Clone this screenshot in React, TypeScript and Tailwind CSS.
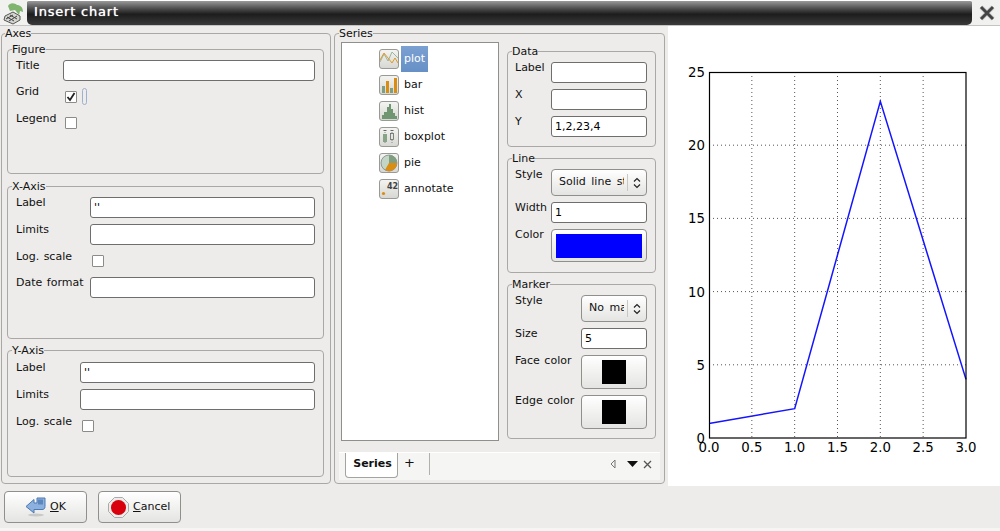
import React from "react";

function Group({ title, className, legend = "ml-[4px]", children }: { title: string; className: string; legend?: string; children: React.ReactNode }) {
  return (
    <fieldset className={`rounded-[4px] border border-[#a9a8a5] ${className}`}>
      <legend className={`h-[14px] text-[11px] leading-[16px] ${legend}`}>{title}</legend>
      {children}
    </fieldset>
  );
}

function Row({ label, labelWidth, height, children }: { label: string; labelWidth: string; height: string; children: React.ReactNode }) {
  return (
    <div className={`flex ${height}`}>
      <div className={`shrink-0 whitespace-nowrap leading-[16px] [word-spacing:1px] ${labelWidth}`}>{label}</div>
      {children}
    </div>
  );
}

function TextBox({ value = "", width }: { value?: string; width: string }) {
  return (
    <input
      readOnly
      value={value}
      className={`mt-[2px] h-[21px] rounded-[3px] border border-[#6e6e6c] bg-white px-[3px] text-[11px] text-black outline-none ${width}`}
    />
  );
}

function CheckBox({ checked, top }: { checked?: boolean; top: string }) {
  return (
    <div className={`ml-[2px] flex h-[12px] w-[12px] items-center justify-center rounded-[1px] border border-[#8b8b88] bg-white ${top}`}>
      {checked && (
        <svg width="10" height="10" viewBox="0 0 10 10">
          <path d="M1.5 5 L4 8 L8.5 1" fill="none" stroke="#222" strokeWidth="1.8" />
        </svg>
      )}
    </div>
  );
}

function Combo({ text, width }: { text: string; width: string }) {
  return (
    <div className={`mt-[2px] flex h-[27px] items-center rounded-[4px] border border-[#8f8f8c] bg-gradient-to-b from-white to-[#e4e4e2] ${width}`}>
      <div className="ml-[7px] mr-[3px] flex-1 overflow-hidden whitespace-nowrap [word-spacing:2px]">{text}</div>
      <div className="h-[17px] w-px bg-[#c8c8c6]" />
      <svg width="18" height="14" viewBox="0 0 18 14">
        <path d="M6 5.5 L9 2.5 L12 5.5 M6 8.5 L9 11.5 L12 8.5" fill="none" stroke="#222" strokeWidth="1.2" />
      </svg>
    </div>
  );
}

function ColorButton({ height, swatch, width }: { height: string; swatch: string; width: string }) {
  return (
    <div className={`mt-[2px] flex items-center justify-center rounded-[4px] border border-[#8f8f8c] bg-gradient-to-b from-white to-[#e4e4e2] ${height} ${width}`}>
      <div className={swatch} />
    </div>
  );
}

function ToolIcon({ children }: { children: React.ReactNode }) {
  return (
    <svg width="20" height="20" viewBox="0 0 20 20" className="shrink-0">
      <defs>
        <linearGradient id="toolbg" x1="0" y1="0" x2="0" y2="1">
          <stop offset="0" stopColor="#f4f4f2" />
          <stop offset="1" stopColor="#d6d6d2" />
        </linearGradient>
      </defs>
      <rect x="0.5" y="0.5" width="19" height="19" rx="2.5" fill="url(#toolbg)" stroke="#9a9a94" />
      {children}
    </svg>
  );
}

const seriesTypes = [
  {
    name: "plot",
    icon: (
      <>
        <path d="M1 13 L5 5 L9 12 L13 3 L19 9" fill="none" stroke="#9db59a" strokeWidth="1" />
        <path d="M1 11 L5 4 L9 9 L13 14 L16 9 L19 14" fill="none" stroke="#dd9a2b" strokeWidth="1" />
      </>
    ),
  },
  {
    name: "bar",
    icon: (
      <>
        <rect x="3" y="11" width="3" height="7" fill="#7f9f80" />
        <rect x="7" y="6" width="3" height="12" fill="#d98d12" />
        <rect x="11" y="13" width="3" height="5" fill="#7f9f80" />
        <rect x="15" y="3" width="3" height="15" fill="#d98d12" />
      </>
    ),
  },
  {
    name: "hist",
    icon: (
      <path d="M3 18 V14 H5 V11 H8 V6 H10 V3 H12 V8 H14 V12 H16 V15 H18 V18 Z" fill="#6f9670" />
    ),
  },
  {
    name: "boxplot",
    icon: (
      <>
        <path d="M6 3 V17 M13 3 V17" stroke="#888" strokeWidth="1" strokeDasharray="1 1" fill="none" />
        <path d="M4.5 3.5 H7.5 M11.5 3.5 H14.5" stroke="#666" strokeWidth="1" fill="none" />
        <rect x="4" y="7" width="4" height="8" fill="#85a586" />
        <rect x="11.5" y="6.5" width="3" height="6" fill="#dfe7df" stroke="#666" strokeWidth="0.8" />
      </>
    ),
  },
  {
    name: "pie",
    icon: (
      <>
        <circle cx="10" cy="10" r="8" fill="#c3d5c5" stroke="#667" strokeWidth="0.6" />
        <path d="M10 10 L10 2 A8 8 0 0 1 18 10 Z" fill="#7f9f80" />
        <path d="M10 10 L18 10 A8 8 0 0 1 6 17 Z" fill="#d98d12" />
      </>
    ),
  },
  {
    name: "annotate",
    icon: (
      <>
        <circle cx="4.5" cy="14.5" r="1.6" fill="#d98d12" />
        <text x="8" y="10" fontSize="8" fontWeight="bold" fill="#444" fontFamily="DejaVu Sans">42</text>
      </>
    ),
  },
];

function Chart() {
  const xTicks = ["0.0", "0.5", "1.0", "1.5", "2.0", "2.5", "3.0"];
  const yTicks = ["0", "5", "10", "15", "20", "25"];
  return (
    <svg width="332" height="460" viewBox="0 0 332 460" fontFamily="DejaVu Sans" fontSize="13.3" fill="#000">
      {xTicks.map((t, i) => {
        const x = 41 + i * 42.83;
        return (
          <g key={t}>
            {i > 0 && i < 6 && <line x1={x} y1="46" x2={x} y2="412" stroke="#555" strokeWidth="1" strokeDasharray="1 3" />}
            <text x={x} y="425.5" textAnchor="middle">{t}</text>
          </g>
        );
      })}
      {yTicks.map((t, i) => {
        const y = 412 - i * 73.2;
        return (
          <g key={t}>
            {i > 0 && i < 5 && <line x1="41" y1={y} x2="298" y2={y} stroke="#555" strokeWidth="1" strokeDasharray="1 3" />}
            <text x="37" y={y + 5} textAnchor="end">{t}</text>
          </g>
        );
      })}
      <polyline points="41,397.4 126.67,382.7 212.33,75.3 298,353.4" fill="none" stroke="#1414ff" strokeWidth="1.5" />
      <rect x="41.5" y="46.5" width="256.5" height="365.5" fill="none" stroke="#000" strokeWidth="1.2" />
    </svg>
  );
}

export default function App() {
  return (
    <div className="flex h-[531px] w-[1000px] flex-col overflow-hidden bg-[#edecea] font-['DejaVu_Sans',sans-serif] text-[11px] text-[#111]">
      {/* window title */}
      <div className="flex h-[26px] shrink-0 border-b border-[#c4c4c2] bg-[#f1f1ef]">
        <svg width="27" height="25" viewBox="0 0 27 25" className="shrink-0">
          <path d="M8 6 C10 2 15 3 17 5 C20 5 23 7 23 12 L20 11 L19 15 L15 10 L10 11 Z" fill="#7fb56f" />
          <path d="M5 16 L13 12 L20 16 L20 20 L13 24 L4 20 Z" fill="#d5d5d0" stroke="#555" strokeWidth="1" />
          <path d="M7 17 L14 21 M10 15 L17 19 M6 19 L13 15 M9 21 L17 16" stroke="#444" strokeWidth="1" />
        </svg>
        <div className="flex h-[25px] w-[945px] items-center rounded-b-[5px] rounded-t-[2px] border-t border-t-white bg-gradient-to-b from-[#9a9a9a] via-[#1d1d1d] via-[55%] to-[#3a3a3a] pb-[2px] pl-[7px] text-[13px] tracking-[0.8px] text-white [text-shadow:0_0_1px_#fff]">
          Insert chart
        </div>
        <div className="flex flex-1 items-center justify-center pl-[2px]">
          <svg width="18" height="18" viewBox="0 0 18 18">
            <path d="M3 3 L15 15 M15 3 L3 15" stroke="#d8d8d8" strokeWidth="5" />
            <path d="M3 3 L15 15 M15 3 L3 15" stroke="#444" strokeWidth="3" />
          </svg>
        </div>
      </div>

      <div className="flex h-[460px] shrink-0">
        {/* axes settings */}
        <Group title="Axes" legend="ml-[3px]" className="ml-px h-[458px] w-[330px] shrink-0">
          <div className="ml-[5px] mt-[2px] flex w-[317px] flex-col gap-[4px]">
            <Group title="Figure" className="h-[132px]">
              <div className="pl-[8px] pt-[2px]">
                <Row label="Title" labelWidth="w-[47px]" height="h-[26px]">
                  <TextBox width="w-[252px]" />
                </Row>
                <Row label="Grid" labelWidth="w-[47px]" height="h-[27px]">
                  <CheckBox checked top="mt-[7px] ml-[2px]" />
                  <div className="ml-[5px] mt-[4px] h-[17px] w-[5px] rounded-full border border-[#9db1d0]" />
                </Row>
                <Row label="Legend" labelWidth="w-[47px]" height="h-[27px]">
                  <CheckBox top="mt-[6px] ml-[2px]" />
                </Row>
              </div>
            </Group>
            <Group title="X-Axis" className="mt-px h-[160px]">
              <div className="pl-[8px] pt-[2px]">
                <Row label="Label" labelWidth="w-[74px]" height="h-[27px]">
                  <TextBox value="''" width="w-[225px]" />
                </Row>
                <Row label="Limits" labelWidth="w-[74px]" height="h-[27px]">
                  <TextBox width="w-[225px]" />
                </Row>
                <Row label="Log. scale" labelWidth="w-[74px]" height="h-[26px]">
                  <CheckBox top="mt-[6px]" />
                </Row>
                <Row label="Date format" labelWidth="w-[74px]" height="h-[27px]">
                  <TextBox width="w-[225px]" />
                </Row>
              </div>
            </Group>
            <Group title="Y-Axis" className="h-[134px]">
              <div className="pl-[8px] pt-[3px]">
                <Row label="Label" labelWidth="w-[64px]" height="h-[27px]">
                  <TextBox value="''" width="w-[235px]" />
                </Row>
                <Row label="Limits" labelWidth="w-[64px]" height="h-[27px]">
                  <TextBox width="w-[235px]" />
                </Row>
                <Row label="Log. scale" labelWidth="w-[64px]" height="h-[27px]">
                  <CheckBox top="mt-[6px]" />
                </Row>
              </div>
            </Group>
          </div>
        </Group>

        {/* series settings */}
        <Group title="Series" className="ml-[3px] h-[458px] w-[331px] shrink-0">
          <div className="flex">
            <div className="ml-[6px] mt-[2px] h-[399px] w-[158px] shrink-0 border border-[#8f8f8c] bg-white pt-[3px]">
              {seriesTypes.map((s) => (
                <div key={s.name} className="flex h-[26px] items-center pl-[37px]">
                  <ToolIcon>{s.icon}</ToolIcon>
                  <div
                    className={
                      s.name === "plot"
                        ? "ml-[2px] flex h-full items-center bg-gradient-to-b from-[#7ba0d2] to-[#6690c6] px-[3px] text-white"
                        : "ml-[2px] flex h-full items-center px-[3px]"
                    }
                  >
                    {s.name}
                  </div>
                </div>
              ))}
            </div>

            <div className="ml-[8px] mt-[4px] flex w-[149px] flex-col gap-[4px]">
              <Group title="Data" className="h-[103px]">
                <div className="pl-[7px] pt-[2px]">
                  <Row label="Label" labelWidth="w-[36px]" height="h-[27px]">
                    <TextBox width="w-[96px]" />
                  </Row>
                  <Row label="X" labelWidth="w-[36px]" height="h-[27px]">
                    <TextBox width="w-[96px]" />
                  </Row>
                  <Row label="Y" labelWidth="w-[36px]" height="h-[27px]">
                    <TextBox value="1,2,23,4" width="w-[96px]" />
                  </Row>
                </div>
              </Group>
              <Group title="Line" className="h-[122px]">
                <div className="pl-[7px] pt-[2px]">
                  <Row label="Style" labelWidth="w-[36px]" height="h-[33px]">
                    <Combo text="Solid line style" width="w-[96px]" />
                  </Row>
                  <Row label="Width" labelWidth="w-[36px]" height="h-[27px]">
                    <TextBox value="1" width="w-[96px]" />
                  </Row>
                  <Row label="Color" labelWidth="w-[36px]" height="h-[35px]">
                    <ColorButton height="h-[33px]" width="w-[96px]" swatch="h-[24px] w-[86px] bg-[#0000ff]" />
                  </Row>
                </div>
              </Group>
              <Group title="Marker" className="h-[162px]">
                <div className="pl-[7px] pt-[2px]">
                  <Row label="Style" labelWidth="w-[66px]" height="h-[33px]">
                    <Combo text="No marker" width="w-[66px]" />
                  </Row>
                  <Row label="Size" labelWidth="w-[66px]" height="h-[27px]">
                    <TextBox value="5" width="w-[66px]" />
                  </Row>
                  <Row label="Face color" labelWidth="w-[66px]" height="h-[40px]">
                    <ColorButton height="h-[34px]" width="w-[66px]" swatch="h-[24px] w-[24px] bg-black" />
                  </Row>
                  <Row label="Edge color" labelWidth="w-[66px]" height="h-[36px]">
                    <ColorButton height="h-[34px]" width="w-[66px]" swatch="h-[24px] w-[24px] bg-black" />
                  </Row>
                </div>
              </Group>
            </div>
          </div>

          {/* tab strip */}
          <div className="ml-[4px] mt-[11px] flex h-[28px] w-[321px] items-start border-t border-t-white bg-[#f5f5f3] pl-[6px]">
            <div className="flex h-[25px] w-[53px] items-center justify-center rounded-b-[4px] border border-t-0 border-[#a3a3a0] bg-white pb-[2px] pl-[2px] font-bold">
              Series
            </div>
            <div className="flex h-[22px] w-[32px] items-center border-r border-[#b0b0ad] pb-[3px] pl-[6px] text-[13px]">+</div>
            <div className="ml-auto mr-[8px] mt-[6px] flex items-center gap-[8px]">
              <svg width="8" height="10" viewBox="0 0 8 10">
                <path d="M6 1 L2 5 L6 9 Z" fill="none" stroke="#777" strokeWidth="1" />
              </svg>
              <svg width="11" height="6" viewBox="0 0 11 6" className="ml-[2px]">
                <path d="M0 0 H11 L5.5 6 Z" fill="#111" />
              </svg>
              <svg width="9" height="9" viewBox="0 0 9 9" className="ml-[-3px]">
                <path d="M1 1 L8 8 M8 1 L1 8" stroke="#555" strokeWidth="1.3" />
              </svg>
            </div>
          </div>
        </Group>

        <div className="ml-[3px] h-[460px] w-[332px] bg-white">
          <Chart />
        </div>
      </div>

      {/* dialog buttons */}
      <div className="flex h-[42px] shrink-0 gap-[11px] pl-[4px] pt-[5px]">
        <button className="flex h-[32px] w-[83px] items-center rounded-[4px] border border-[#8f8f8c] bg-gradient-to-b from-white to-[#e4e4e2] pl-[20px]">
          <svg width="22" height="20" viewBox="0 0 22 20" className="shrink-0">
            <ellipse cx="11" cy="18" rx="8" ry="1.5" fill="#c9c9c7" />
            <path d="M20 1 H12 V6 H9 V2.5 L1 9.5 L9 16 V12.5 H17 C19 12.5 20 11.5 20 9.5 Z" fill="#8db1de" stroke="#4c79b3" strokeWidth="1" />
            <rect x="13" y="2.5" width="5" height="5" fill="#5c87bd" />
          </svg>
          <span className="ml-[3px]"><span className="underline">O</span>K</span>
        </button>
        <button className="flex h-[32px] w-[83px] items-center rounded-[4px] border border-[#8f8f8c] bg-gradient-to-b from-white to-[#e4e4e2] pl-[9px]">
          <svg width="21" height="21" viewBox="0 0 21 21" className="shrink-0">
            <path d="M6.5 0.5 H14.5 L20.5 6.5 V14.5 L14.5 20.5 H6.5 L0.5 14.5 V6.5 Z" fill="#ececea" stroke="#aaa" strokeWidth="1" />
            <circle cx="10.5" cy="10.5" r="7.5" fill="#d8000c" />
          </svg>
          <span className="ml-[4px]"><span className="underline">C</span>ancel</span>
        </button>
      </div>
      <div className="flex-1 bg-[#f5f5f3]" />
    </div>
  );
}
